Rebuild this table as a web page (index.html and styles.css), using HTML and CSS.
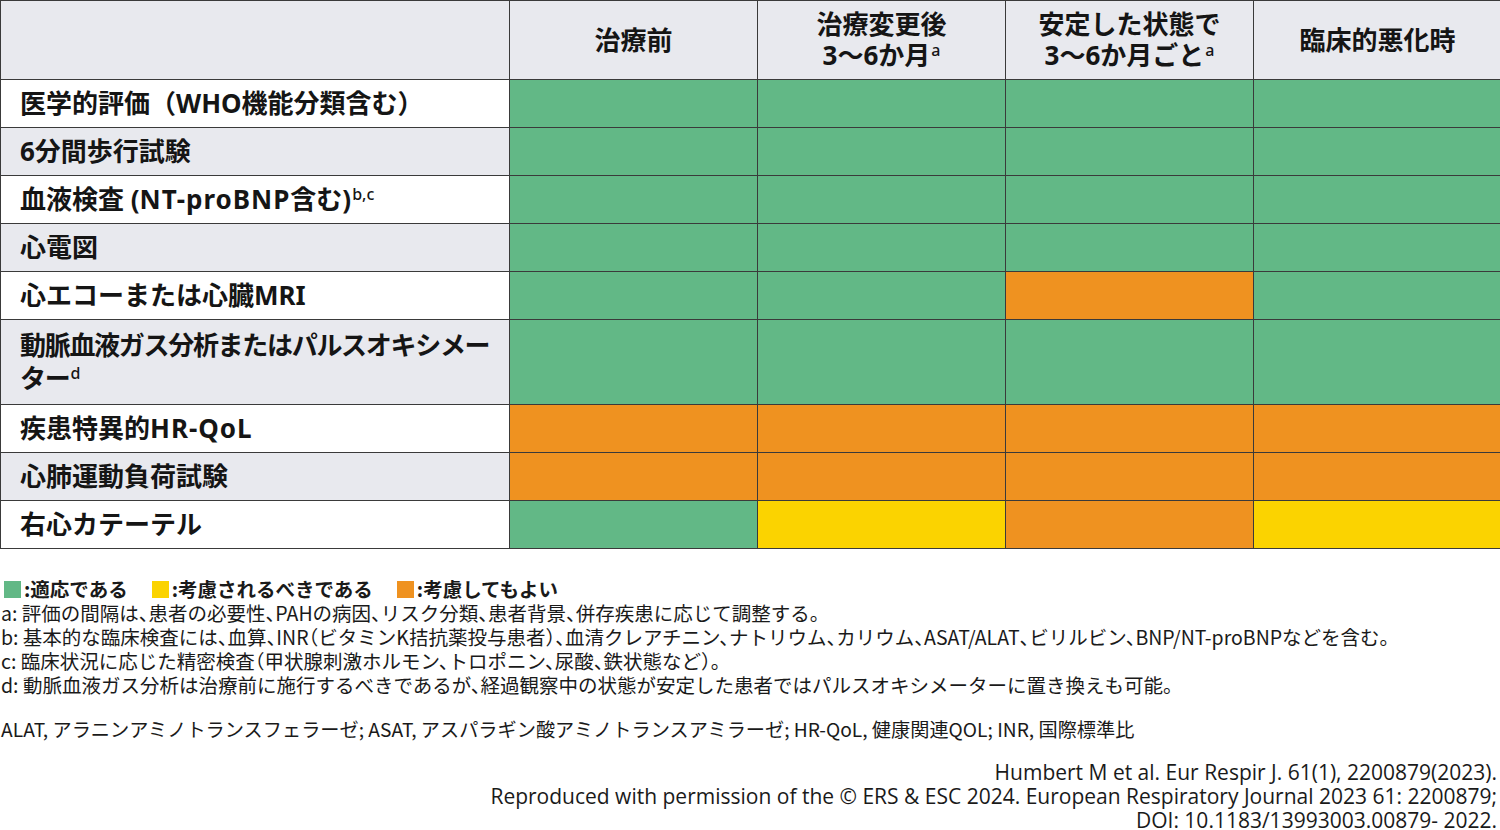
FILE: index.html
```html
<!DOCTYPE html>
<html lang="ja">
<head>
<meta charset="utf-8">
<link rel="stylesheet" href="styles.css">
</head>
<body>
<table class="grid">
  <colgroup>
    <col class="c-label"><col class="c-val"><col class="c-val"><col class="c-val"><col class="c-val">
  </colgroup>
  <thead>
    <tr class="head">
      <th></th>
      <th>治療前</th>
      <th>治療変更後<br>3〜6か月<sup>a</sup></th>
      <th>安定した状態で<br>3〜6か月ごと<sup>a</sup></th>
      <th>臨床的悪化時</th>
    </tr>
  </thead>
  <tbody>
    <tr><td class="lbl w">医学的評価（WHO機能分類含む）</td><td class="g"></td><td class="g"></td><td class="g"></td><td class="g"></td></tr>
    <tr><td class="lbl">6分間歩行試験</td><td class="g"></td><td class="g"></td><td class="g"></td><td class="g"></td></tr>
    <tr><td class="lbl w">血液検査 (<span class="lat">NT-proBNP</span>含む)<sup>b,c</sup></td><td class="g"></td><td class="g"></td><td class="g"></td><td class="g"></td></tr>
    <tr><td class="lbl">心電図</td><td class="g"></td><td class="g"></td><td class="g"></td><td class="g"></td></tr>
    <tr><td class="lbl w">心エコーまたは心臓MRI</td><td class="g"></td><td class="g"></td><td class="o"></td><td class="g"></td></tr>
    <tr class="tall"><td class="lbl tight">動脈血液ガス分析またはパルスオキシメー<br>ター<sup>d</sup></td><td class="g"></td><td class="g"></td><td class="g"></td><td class="g"></td></tr>
    <tr><td class="lbl w">疾患特異的<span class="lat">HR-QoL</span></td><td class="o"></td><td class="o"></td><td class="o"></td><td class="o"></td></tr>
    <tr><td class="lbl">心肺運動負荷試験</td><td class="o"></td><td class="o"></td><td class="o"></td><td class="o"></td></tr>
    <tr><td class="lbl w">右心カテーテル</td><td class="g"></td><td class="y"></td><td class="o"></td><td class="y"></td></tr>
  </tbody>
</table>

<div class="legend">
  <span class="key"><span class="sw sw-g"></span>:適応である</span>
  <span class="key"><span class="sw sw-y"></span>:考慮されるべきである</span>
  <span class="key"><span class="sw sw-o"></span>:考慮してもよい</span>
</div>
<div class="notes">
  <p>a: 評価の間隔は、患者の必要性、PAHの病因、リスク分類、患者背景、併存疾患に応じて調整する。</p>
  <p>b: 基本的な臨床検査には、血算、INR（ビタミンK拮抗薬投与患者）、血清クレアチニン、ナトリウム、カリウム、ASAT/ALAT、ビリルビン、BNP/NT-proBNPなどを含む。</p>
  <p>c: 臨床状況に応じた精密検査（甲状腺刺激ホルモン、トロポニン、尿酸、鉄状態など）。</p>
  <p>d: 動脈血液ガス分析は治療前に施行するべきであるが、経過観察中の状態が安定した患者ではパルスオキシメーターに置き換えも可能。</p>
</div>
<p class="abbr">ALAT, アラニンアミノトランスフェラーゼ; ASAT, アスパラギン酸アミノトランスアミラーゼ; HR-QoL, 健康関連QOL; INR, 国際標準比</p>
<div class="cite">
  <p>Humbert M et al. Eur Respir J. 61(1), 2200879(2023).</p>
  <p>Reproduced with permission of the © ERS &amp; ESC 2024. European Respiratory Journal 2023 61: 2200879;</p>
  <p>DOI: 10.1183/13993003.00879- 2022.</p>
</div>
</body>
</html>
```

FILE: styles.css
```css
html, body {
  margin: 0;
  padding: 0;
  background: #ffffff;
}
body {
  width: 1500px;
  height: 830px;
  overflow: hidden;
  font-family: "Noto Sans CJK JP", "Noto Sans", sans-serif;
  color: #1a1a1a;
}
.grid {
  width: 1500px;
  border-collapse: collapse;
  table-layout: fixed;
  font-family: "Noto Sans", "Noto Sans CJK JP", sans-serif;
}
.c-label { width: 509px; }
.c-val { width: 248px; }
.grid th, .grid td {
  border: 1.5px solid #3a3a3a;
  padding: 0;
}
.head th {
  height: 78px;
  background: #e8e9ee;
  font-size: 26px;
  font-weight: 700;
  line-height: 31px;
  text-align: center;
  vertical-align: middle;
  color: #151515;
}
sup {
  font-size: 16px;
  font-weight: 500;
  line-height: 1;
  vertical-align: 9px;
  margin-left: 1px;
}
.grid td {
  height: 47px;
}
.tall td {
  height: 84px;
}
.lbl {
  background: #e8e9ee;
  font-size: 26px;
  font-weight: 700;
  line-height: 33px;
  padding: 0 8px 0 19px !important;
  color: #151515;
  vertical-align: middle;
  white-space: nowrap;
}
.lbl .lat { letter-spacing: 1px; }
.lbl.tight { letter-spacing: -1.3px; }
.lbl.w { background: #ffffff; }
.g { background: #62b886; }
.o { background: #ef9220; }
.y { background: #fbd300; }

.legend {
  margin-top: 29px;
  display: flex;
  gap: 24px;
  padding-left: 4px;
  font-size: 19.5px;
  font-weight: 700;
  line-height: 22px;
  color: #1a1a1a;
}
.key {
  display: flex;
  align-items: center;
  gap: 3px;
}
.sw {
  width: 17px;
  height: 17px;
  display: inline-block;
}
.sw-g { background: #62b886; }
.sw-y { background: #fbd300; }
.sw-o { background: #ef9220; }

.notes {
  margin-top: 1px;
  font-size: 19.5px;
  line-height: 24px;
  font-feature-settings: "halt";
  color: #1a1a1a;
}
.notes p {
  margin: 0;
  padding-left: 1px;
}
.abbr {
  margin: 20px 0 0 1px;
  font-size: 19.2px;
  line-height: 24px;
  color: #1a1a1a;
}
.cite {
  margin-top: 19px;
  text-align: right;
  padding-right: 3px;
  font-family: "Open Sans", "Noto Sans", sans-serif;
  font-size: 21px;
  line-height: 24px;
  color: #1a1a1a;
}
.cite p { margin: 0; }
```
